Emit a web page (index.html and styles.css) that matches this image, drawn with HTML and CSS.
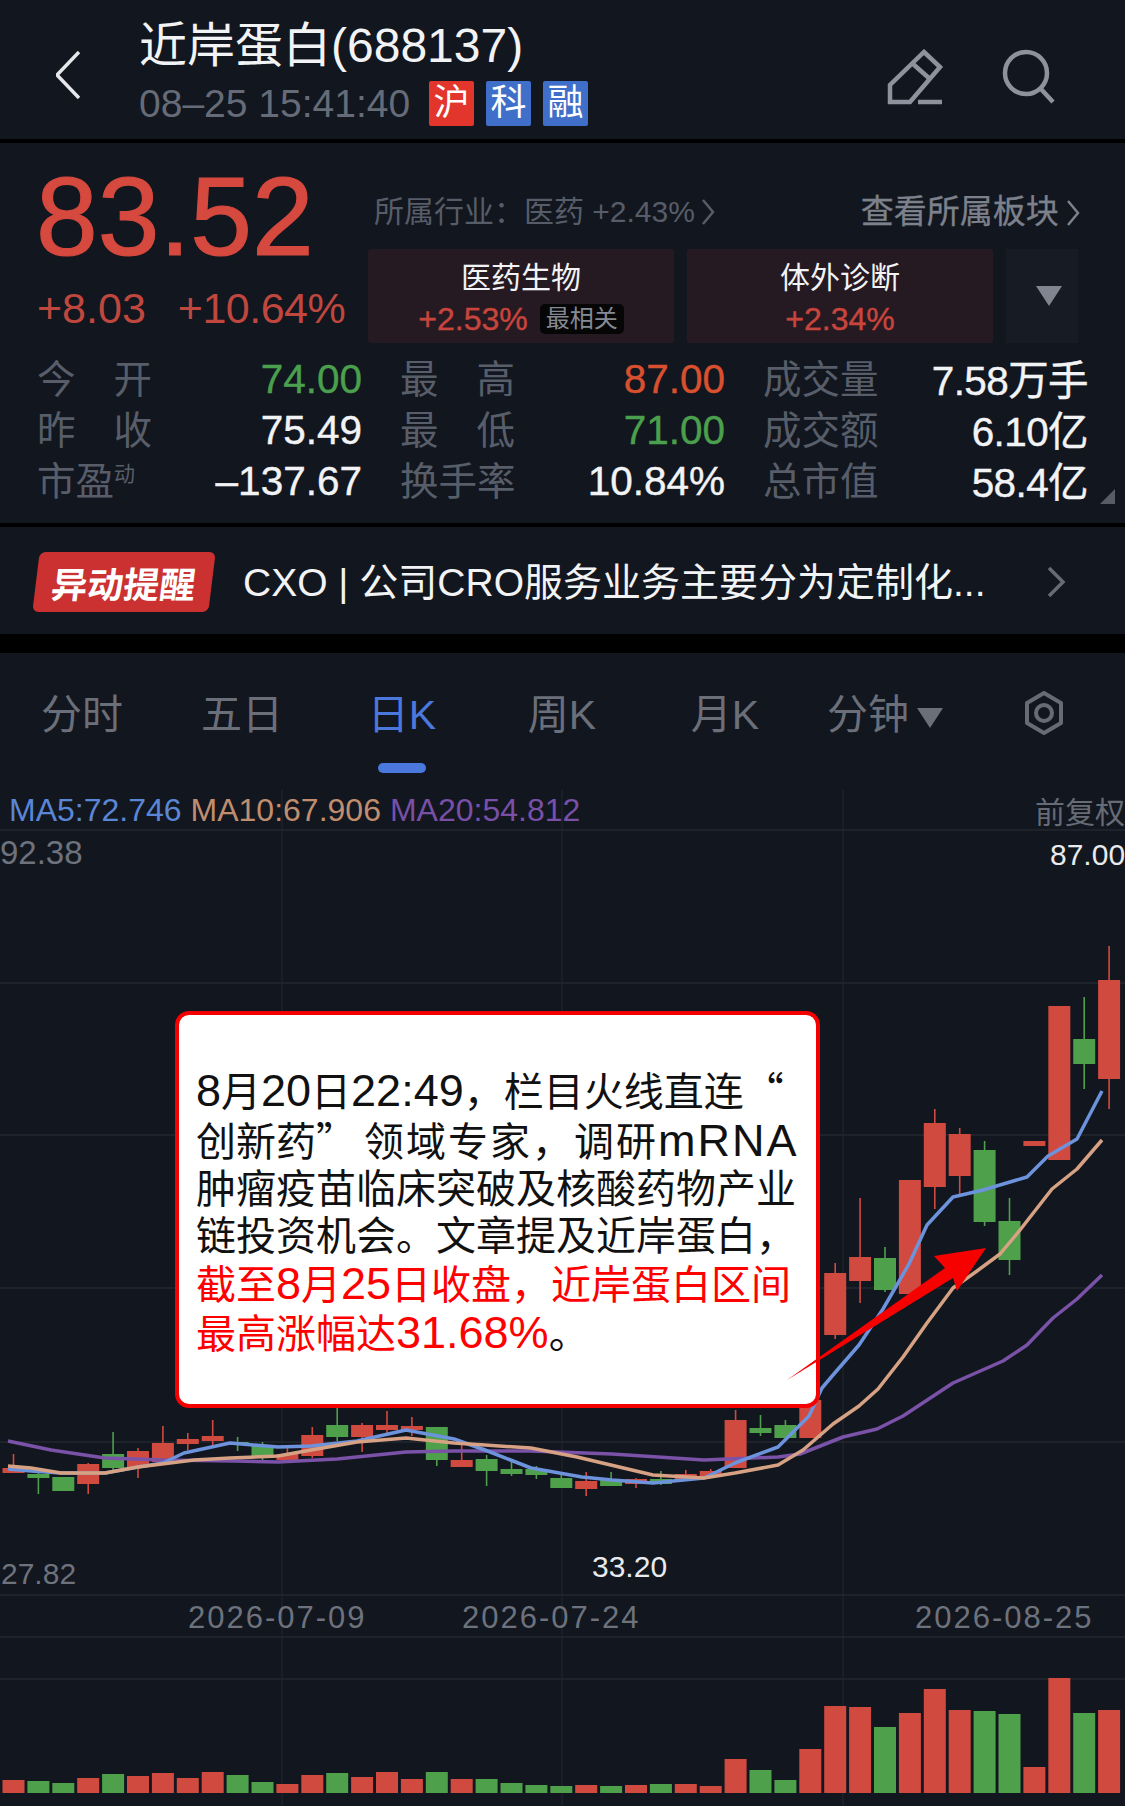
FILE: index.html
```html
<!DOCTYPE html>
<html lang="zh-CN">
<head>
    <meta charset="UTF-8">
    <meta name="viewport" content="width=device-width, initial-scale=1.0">
    <title>近岸蛋白(688137)</title>
    <link rel="stylesheet" href="styles.css">
</head>
<body>

    <header class="topbar">
        <svg class="back" viewBox="0 0 24 48"><path d="M23 1 L1 24 L23 47"/></svg>
        <div class="stock">
            <div class="stock-name">近岸蛋白(688137)</div>
            <div class="stock-sub">
                <span class="stock-time">08–25 15:41:40</span>
                <span class="tag tag-red">沪</span>
                <span class="tag tag-blue">科</span>
                <span class="tag tag-blue">融</span>
            </div>
        </div>
        <svg class="tool tool-pen" viewBox="0 0 56 56">
            <path d="M37 3 L53 18 L23 53 H3 V36 Z"/>
            <path d="M26 15 L43 30"/>
            <path d="M31 53 H55"/>
        </svg>
        <svg class="tool tool-search" viewBox="0 0 56 56">
            <circle cx="25" cy="24" r="21"/>
            <path d="M40 40 L52 53"/>
        </svg>
    </header>

    <section class="quote">
        <div class="quote-main">
            <div class="price">83.52</div>
            <div class="change">
                <span>+8.03</span>
                <span class="change-pct">+10.64%</span>
            </div>
        </div>
        <div class="quote-side">
            <div class="links">
                <span class="link-industry">所属行业：医药 +2.43%
                    <svg class="chevron" viewBox="0 0 14 26"><path d="M2 1 L12 13 L2 25"/></svg>
                </span>
                <span class="link-board">查看所属板块
                    <svg class="chevron" viewBox="0 0 14 26"><path d="M2 1 L12 13 L2 25"/></svg>
                </span>
            </div>
            <div class="sectors">
                <div class="sector">
                    <div class="sector-name">医药生物</div>
                    <div class="sector-rate">+2.53%<span class="sector-note">最相关</span></div>
                </div>
                <div class="sector">
                    <div class="sector-name">体外诊断</div>
                    <div class="sector-rate">+2.34%</div>
                </div>
                <div class="sector-more"><span class="arrow-down"></span></div>
            </div>
        </div>
    </section>

    <section class="stats">
        <div class="stat"><span class="label label-spread"><i>今</i><i>开</i></span><span class="green">74.00</span></div>
        <div class="stat"><span class="label label-spread"><i>最</i><i>高</i></span><span class="orange">87.00</span></div>
        <div class="stat"><span class="label">成交量</span><span class="mixed">7.58万手</span></div>
        <div class="stat"><span class="label label-spread"><i>昨</i><i>收</i></span><span>75.49</span></div>
        <div class="stat"><span class="label label-spread"><i>最</i><i>低</i></span><span class="green">71.00</span></div>
        <div class="stat"><span class="label">成交额</span><span class="mixed">6.10亿</span></div>
        <div class="stat"><span class="label">市盈<sup>动</sup></span><span>–137.67</span></div>
        <div class="stat"><span class="label">换手率</span><span>10.84%</span></div>
        <div class="stat"><span class="label">总市值</span><span class="mixed">58.4亿</span></div>
        <span class="corner"></span>
    </section>

    <section class="alert">
        <span class="alert-badge"><b>异动提醒</b></span>
        <span class="alert-text">CXO | 公司CRO服务业务主要分为定制化...</span>
        <svg class="alert-go" viewBox="0 0 20 32"><path d="M3 2 L17 16 L3 30"/></svg>
    </section>

    <nav class="tabs">
        <span class="tab">分时</span>
        <span class="tab">五日</span>
        <span class="tab tab-active">日K</span>
        <span class="tab">周K</span>
        <span class="tab">月K</span>
        <span class="tab">分钟<i class="arrow-down arrow-tab"></i></span>
        <span class="tab">
            <svg class="tab-gear" viewBox="0 0 40 44">
                <path d="M20 2 L37 12 V32 L20 42 L3 32 V12 Z"/>
                <circle cx="20" cy="22" r="8"/>
            </svg>
        </span>
    </nav>

    <section class="chart">
        <svg id="kline" class="kline" viewBox="0 790 1125 1016"></svg>

        <div class="ma-row">
            <span class="ma5">MA5:72.746</span>
            <span class="ma10">MA10:67.906</span>
            <span class="ma20">MA20:54.812</span>
            <span class="ma-mode">前复权</span>
        </div>

        <div class="note">
            <p><span class="num">8</span>月<span class="num">20</span>日<span class="num">22:49</span>，栏目火线直连<span class="cjk">“</span><br>创新药<span class="cjk quote-close">”</span><span class="wide">领域专家，调研</span><span class="num num-wide">mRNA</span><br>肿瘤疫苗临床突破及核酸药物产业<br>链投资机会。文章提及近岸蛋白，<br><span class="note-red">截至<span class="num">8</span>月<span class="num">25</span>日收盘，近岸蛋白区间<br>最高涨幅达<span class="num">31.68%</span></span>。</p>
        </div>

        <svg class="note-arrow" viewBox="0 790 1125 1016">
            <polygon points="787,1380 945,1268 934,1256 986,1248 957,1291 953,1278"/>
        </svg>
    </section>

    <script src="chart.js"></script>
</body>
</html>
```

FILE: styles.css
```css
* {
    box-sizing: border-box;
}

body {
    width: 1125px;
    height: 1806px;
    margin: 0;
    overflow: hidden;
    background-color: #12161f;
    color: #f2f3f5;
    font-family: "Liberation Sans", "Noto Sans CJK SC", sans-serif;
}

/* top bar */
.topbar {
    display: flex;
    align-items: flex-start;
    height: 143px;
    padding-left: 56px;
    border-bottom: 4px solid #000;
}

.back {
    width: 24px;
    height: 48px;
    margin-top: 51px;
    fill: none;
    stroke: #e6e7ea;
    stroke-width: 3.5;
}

.stock {
    margin-left: 59px;
    padding-top: 19px;
}

.stock-name {
    font-size: 48px;
    line-height: 54px;
    white-space: nowrap;
}

.stock-sub {
    display: flex;
    align-items: center;
    margin-top: 8px;
}

.stock-time {
    width: 290px;
    font-size: 39px;
    color: #666c77;
}

.tag {
    width: 45px;
    height: 45px;
    margin-right: 12px;
    border-radius: 2px;
    font-size: 36px;
    line-height: 44px;
    text-align: center;
    color: #fff;
}

.tag-red {
    background-color: #e2352c;
}

.tag-blue {
    background-color: #3f6fc9;
}

.tool {
    fill: none;
    stroke: #8d929c;
    stroke-width: 4.5;
    width: 56px;
    height: 56px;
    margin-top: 49px;
}

.tool-pen {
    margin-left: 287px;
}

.tool-search {
    margin-left: 58px;
}

/* price block */
.quote {
    display: flex;
    height: 205px;
    padding-left: 36px;
}

.price {
    margin-top: 24px;
    font-size: 111px;
    line-height: 100px;
    color: #d6493e;
    -webkit-text-stroke: 1.2px #d6493e;
}

.change {
    display: flex;
    gap: 32px;
    margin-top: 16px;
    padding-left: 1px;
    font-size: 43px;
    line-height: 50px;
    color: #bf473e;
}

.change-pct {
    letter-spacing: -0.5px;
}

.quote-main {
    width: 332px;
}

.quote-side {
    width: 712px;
    padding-top: 46px;
}

.links {
    display: flex;
    justify-content: space-between;
    align-items: center;
    height: 40px;
    padding-left: 6px;
}

.link-industry {
    font-size: 30px;
    color: #575d68;
}

.link-board {
    font-size: 33px;
    color: #7c818b;
    -webkit-text-stroke: 0.3px #7c818b;
}

.chevron {
    width: 14px;
    height: 26px;
    margin-left: -2px;
    vertical-align: -3px;
    fill: none;
    stroke: currentColor;
    stroke-width: 2.5;
}

.sectors {
    display: flex;
    gap: 13px;
    margin-top: 20px;
}

.sector {
    width: 306px;
    height: 94px;
    padding-top: 9px;
    border-radius: 3px;
    background-color: #261a22;
    text-align: center;
}

.sector-name {
    font-size: 30px;
    line-height: 40px;
}

.sector-rate {
    display: flex;
    justify-content: center;
    align-items: center;
    height: 42px;
    font-size: 32px;
    color: #c8453d;
    -webkit-text-stroke: 0.4px #c8453d;
}

.sector-note {
    margin-left: 12px;
    padding: 0 6px;
    border-radius: 5px;
    background-color: #060607;
    font-size: 24px;
    line-height: 30px;
    color: #858a94;
    -webkit-text-stroke: 0;
}

.sector-more {
    display: flex;
    justify-content: center;
    align-items: center;
    width: 72px;
    height: 94px;
    padding-left: 14px;
    background-color: #171b24;
}

.arrow-down {
    display: inline-block;
    border-style: solid;
    border-width: 20px 13px 0;
    border-color: #80858f transparent transparent;
}

/* stats grid */
.stats {
    position: relative;
    display: grid;
    grid-template-columns: repeat(3, 325px);
    column-gap: 38px;
    grid-auto-rows: 51px;
    height: 179px;
    padding: 6px 0 0 37px;
    border-bottom: 4px solid #000;
    font-size: 40.5px;
}

.stat {
    display: flex;
    justify-content: space-between;
    align-items: center;
    white-space: nowrap;
}

.stat > span:last-child {
    -webkit-text-stroke: 0.4px currentColor;
}

.mixed {
    margin-bottom: 4px;
    letter-spacing: -0.6px;
}

.label {
    width: 115px;
    margin-bottom: 8px;
    font-size: 38.5px;
    color: #585e69;
}

.label-spread {
    display: flex;
    justify-content: space-between;
}

.label i {
    font-style: normal;
}

.label sup {
    font-size: 21px;
    line-height: 0;
}

.green {
    color: #4aa04c;
}

.orange {
    color: #d9502f;
}

.corner {
    position: absolute;
    right: 10px;
    top: 141px;
    border-style: solid;
    border-width: 0 0 15px 15px;
    border-color: transparent transparent #575c67;
}

/* alert row */
.alert {
    display: flex;
    align-items: center;
    height: 126px;
    padding: 3px 0 0 36px;
    border-bottom: 19px solid #000;
}

.alert-badge {
    display: flex;
    justify-content: center;
    align-items: center;
    width: 176px;
    height: 60px;
    border-radius: 6px;
    background-color: #cb3131;
    transform: skewX(-7deg);
}

.alert-badge b {
    font-size: 36px;
    color: #fff;
}

.alert-text {
    margin-bottom: 6px;
    margin-left: 31px;
    font-size: 39px;
    white-space: nowrap;
}

.alert-go {
    width: 20px;
    height: 32px;
    margin-left: 60px;
    fill: none;
    stroke: #666b75;
    stroke-width: 3.5;
}

/* period tabs */
.tabs {
    display: grid;
    grid-template-columns: repeat(7, 160px);
    height: 137px;
    padding: 38px 0 0 2px;
}

.tab {
    display: flex;
    flex-direction: column;
    align-items: center;
    flex-wrap: wrap;
    height: 90px;
    font-size: 41px;
    line-height: 48px;
    color: #6a6f79;
}

.tab-active {
    color: #4a78dc;
}

.tab-active::after {
    content: "";
    width: 48px;
    height: 10px;
    margin-top: 24px;
    border-radius: 5px;
    background-color: #4a78dc;
}

.arrow-tab {
    margin: 17px 0 0 8px;
    border-color: #6a6f79 transparent transparent;
}

.tab:nth-child(5) {
    padding-left: 6px;
}

.tab:nth-child(6) {
    flex-direction: row;
    flex-wrap: nowrap;
    align-items: flex-start;
    justify-content: center;
    padding-left: 6px;
}

.tab:nth-child(7) {
    padding-left: 4px;
}

.tab-gear {
    width: 40px;
    height: 44px;
    fill: none;
    stroke: #666b75;
    stroke-width: 4;
    stroke-linejoin: round;
}

/* k-line chart */
.chart {
    position: relative;
    height: 1016px;
}

.kline,
.note-arrow {
    position: absolute;
    left: 0;
    top: 0;
    width: 1125px;
    height: 1016px;
}

.axis-text {
    font-size: 30px;
    fill: #6d727c;
}

.axis-white {
    fill: #e9eaed;
}

.axis-big {
    font-size: 33px;
}

.axis-date {
    font-size: 31px;
    letter-spacing: 2px;
    fill: #6d727c;
}

.ma-row {
    position: relative;
    display: flex;
    gap: 9px;
    align-items: center;
    height: 40px;
    padding-left: 9px;
    font-size: 32px;
}

.ma5 {
    color: #5b86d6;
}

.ma10 {
    color: #c08e6e;
}

.ma20 {
    color: #7850a6;
}

.ma-mode {
    margin-left: auto;
    font-size: 30px;
    color: #666b75;
}

.note {
    position: absolute;
    left: 175px;
    top: 221px;
    display: flex;
    align-items: center;
    width: 645px;
    height: 397px;
    padding: 4px 0 0 17px;
    border: 4px solid #f50000;
    border-radius: 14px;
    background-color: #fff;
}

.note p {
    margin: 0;
    font-size: 40px;
    line-height: 47px;
    color: #111;
    white-space: nowrap;
}

.num {
    font-size: 45px;
}

.num-wide {
    letter-spacing: 2px;
}

.wide {
    letter-spacing: 2px;
}

.cjk {
    font-family: "Noto Sans CJK SC", sans-serif;
}

.quote-close {
    letter-spacing: 8px;
}

.note-red {
    color: #f00;
}

.note-arrow polygon {
    fill: #f60000;
}
```

FILE: chart.js
```js
// color, wick top, body top, body bottom, wick bottom (y in page px)
const candles = [
    ['r', 1454, 1468, 1473, 1473], ['g', 1472, 1474, 1478, 1494], ['g', 1477, 1477, 1491, 1491],
    ['r', 1463, 1464, 1484, 1494], ['g', 1432, 1454, 1468, 1470], ['r', 1448, 1451, 1467, 1478],
    ['r', 1426, 1443, 1462, 1463], ['r', 1433, 1439, 1444, 1450], ['r', 1420, 1436, 1441, 1445],
    ['g', 1437, 1442, 1443, 1451], ['g', 1442, 1446, 1457, 1460], ['r', 1448, 1454, 1460, 1462],
    ['r', 1427, 1435, 1456, 1458], ['g', 1400, 1425, 1437, 1441], ['r', 1423, 1425, 1437, 1452],
    ['r', 1411, 1425, 1430, 1433], ['r', 1417, 1426, 1430, 1436], ['g', 1427, 1427, 1460, 1466],
    ['r', 1443, 1460, 1467, 1467], ['g', 1455, 1459, 1471, 1486], ['g', 1462, 1469, 1474, 1476],
    ['g', 1466, 1469, 1475, 1479], ['g', 1475, 1478, 1488, 1488], ['r', 1472, 1481, 1489, 1496],
    ['g', 1472, 1480, 1486, 1486], ['r', 1478, 1479, 1484, 1488], ['g', 1471, 1479, 1484, 1485],
    ['r', 1470, 1474, 1479, 1480], ['r', 1469, 1471, 1477, 1478], ['r', 1410, 1420, 1468, 1468],
    ['g', 1415, 1428, 1433, 1436], ['g', 1420, 1425, 1438, 1438], ['r', 1400, 1400, 1438, 1438],
    ['r', 1263, 1273, 1335, 1339], ['r', 1198, 1257, 1281, 1303], ['g', 1247, 1258, 1290, 1292],
    ['r', 1180, 1180, 1294, 1294], ['r', 1109, 1123, 1187, 1209], ['r', 1128, 1134, 1176, 1194],
    ['g', 1141, 1150, 1222, 1226], ['g', 1198, 1221, 1260, 1275], ['r', 1141, 1141, 1146, 1146],
    ['r', 1006, 1006, 1160, 1160], ['g', 997, 1039, 1064, 1089], ['r', 946, 980, 1079, 1109]
];

const volumes = [
    1780, 1781, 1783, 1778, 1774, 1776, 1773, 1778, 1772, 1775, 1782, 1784, 1775, 1773, 1777,
    1772, 1779, 1772, 1779, 1779, 1783, 1785, 1786, 1785, 1786, 1785, 1784, 1784, 1786, 1759,
    1770, 1780, 1749, 1706, 1707, 1727, 1713, 1689, 1710, 1711, 1714, 1767, 1678, 1713, 1710
];

const ma5 = '8,1469 31,1471 61,1473 105,1473 138,1467 163,1463 184,1453 230,1443 278,1447 311,1446 357,1441 406,1430 454,1439 485,1450 531,1468 582,1477 612,1480 653,1483 704,1478 735,1463 778,1447 800,1425 809,1416 822,1388 833,1375 859,1345 883,1309 909,1264 927,1225 953,1197 983,1190 1027,1177 1048,1156 1077,1139 1102,1091';
const ma10 = '8,1466 31,1468 61,1473 105,1473 138,1467 194,1460 230,1458 278,1456 311,1450 357,1442 406,1438 454,1443 485,1445 531,1448 577,1457 653,1475 704,1478 735,1473 778,1465 803,1450 833,1424 859,1406 878,1389 903,1357 927,1323 953,1288 977,1271 1000,1254 1020,1230 1052,1189 1077,1169 1102,1140';
const ma20 = '8,1441 51,1450 105,1458 163,1460 235,1461 278,1462 337,1459 406,1452 454,1451 531,1451 612,1454 704,1460 778,1457 800,1454 843,1437 877,1429 903,1416 953,1383 1003,1361 1027,1345 1053,1318 1077,1299 1102,1275';

const RED = '#d14a40';
const GREEN = '#4ea04b';
const STEP = 24.9;
const BAR = 22;

function centerOf(i) {
    return 13.5 + STEP * i;
}

function drawChart() {
    let out = '';

    [830, 983, 1135, 1288, 1442, 1595, 1637, 1679].forEach(function (y) {
        out += `<line x1="0" x2="1125" y1="${y}" y2="${y}" stroke="#2a2e37"/>`;
    });
    [282, 562, 843].forEach(function (x) {
        out += `<line x1="${x}" x2="${x}" y1="790" y2="1806" stroke="#22262f"/>`;
    });

    candles.forEach(function (c, i) {
        let color = c[0] === 'r' ? RED : GREEN;
        let x = centerOf(i);
        out += `<line x1="${x}" x2="${x}" y1="${c[1]}" y2="${c[4]}" stroke="${color}" stroke-width="1.6"/>`;
        out += `<rect x="${x - BAR / 2}" y="${c[2]}" width="${BAR}" height="${c[3] - c[2]}" fill="${color}"/>`;

        let vol = volumes[i];
        out += `<rect x="${x - BAR / 2}" y="${vol}" width="${BAR}" height="${1793 - vol}" fill="${color}"/>`;
    });

    [[ma20, '#7a52a8'], [ma5, '#6c93dc'], [ma10, '#d6a283']].forEach(function (line) {
        out += `<polyline points="${line[0]}" fill="none" stroke="${line[1]}" stroke-width="3.5" stroke-linejoin="round"/>`;
    });

    out += '<text class="axis-text axis-big" x="0" y="864">92.38</text>';
    out += '<text class="axis-text axis-white" x="1050" y="865">87.00</text>';
    out += '<text class="axis-text" x="1" y="1584">27.82</text>';
    out += '<text class="axis-text axis-white" x="592" y="1577">33.20</text>';
    out += '<text class="axis-date" x="188" y="1628">2026-07-09</text>';
    out += '<text class="axis-date" x="462" y="1628">2026-07-24</text>';
    out += '<text class="axis-date" x="915" y="1628">2026-08-25</text>';

    document.getElementById('kline').innerHTML = out;
}

drawChart();
```
